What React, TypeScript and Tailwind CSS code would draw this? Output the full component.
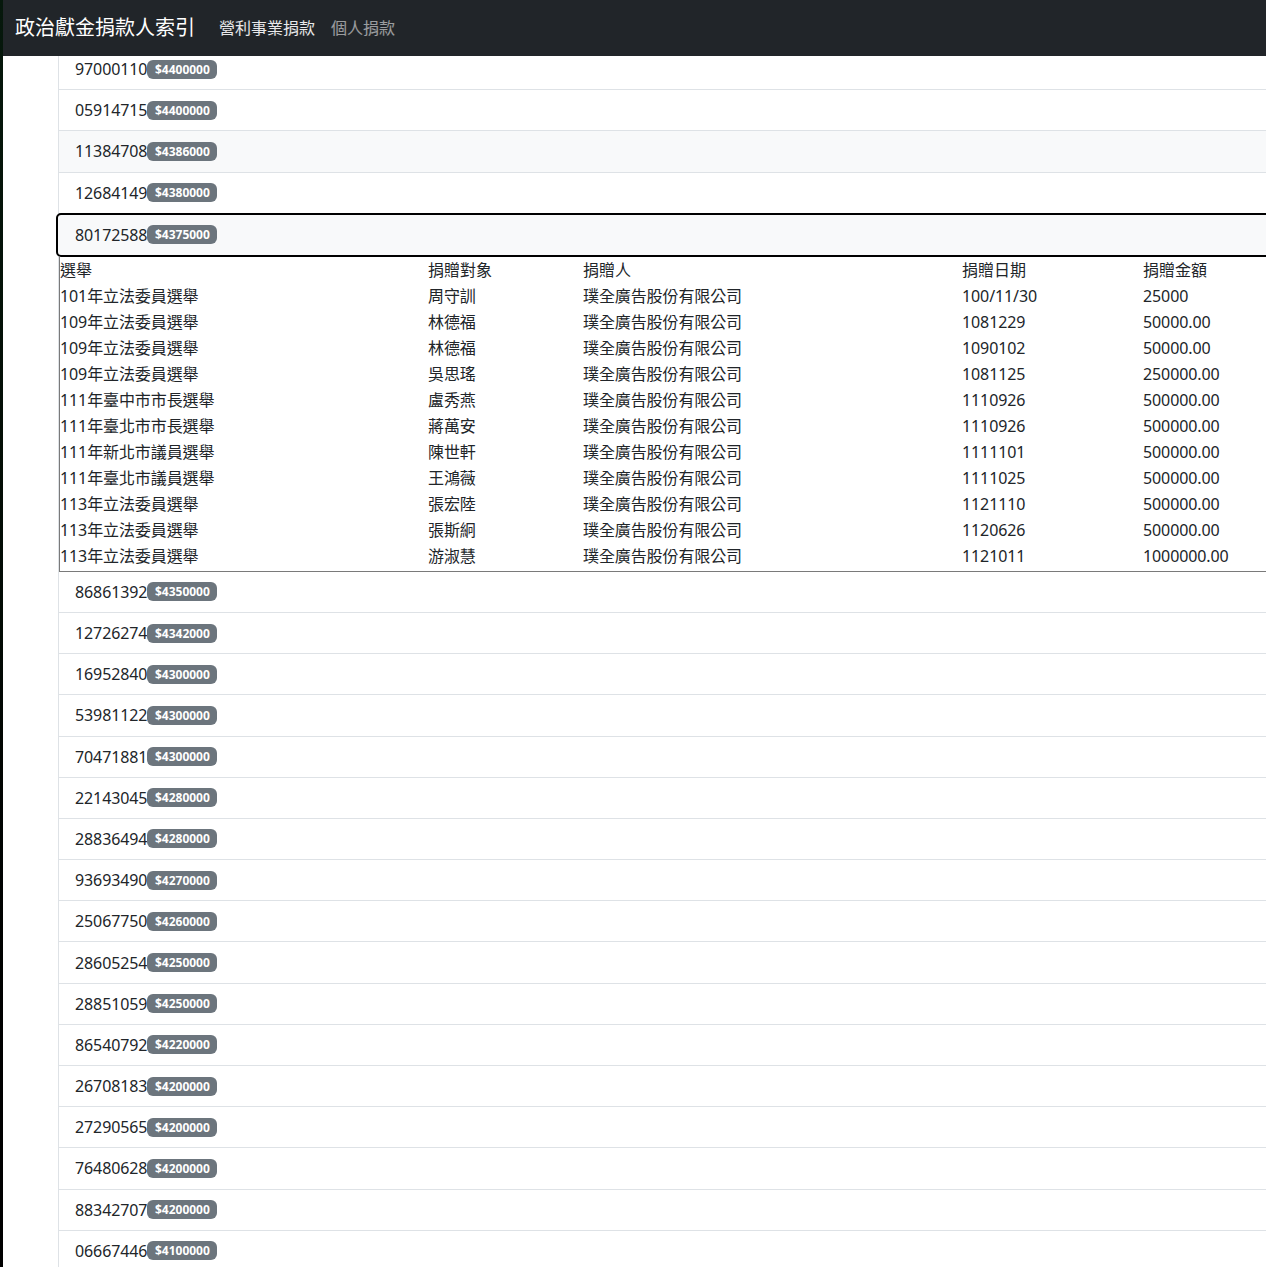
import React from "react";

const before: [string, string, boolean][] = [
  ["97000110", "$4400000", false],
  ["05914715", "$4400000", false],
  ["11384708", "$4386000", true],
  ["12684149", "$4380000", false],
];

const after: [string, string][] = [
  ["86861392", "$4350000"],
  ["12726274", "$4342000"],
  ["16952840", "$4300000"],
  ["53981122", "$4300000"],
  ["70471881", "$4300000"],
  ["22143045", "$4280000"],
  ["28836494", "$4280000"],
  ["93693490", "$4270000"],
  ["25067750", "$4260000"],
  ["28605254", "$4250000"],
  ["28851059", "$4250000"],
  ["86540792", "$4220000"],
  ["26708183", "$4200000"],
  ["27290565", "$4200000"],
  ["76480628", "$4200000"],
  ["88342707", "$4200000"],
  ["06667446", "$4100000"],
];

const rows: string[][] = [
  ["101年立法委員選舉", "周守訓", "璞全廣告股份有限公司", "100/11/30", "25000"],
  ["109年立法委員選舉", "林德福", "璞全廣告股份有限公司", "1081229", "50000.00"],
  ["109年立法委員選舉", "林德福", "璞全廣告股份有限公司", "1090102", "50000.00"],
  ["109年立法委員選舉", "吳思瑤", "璞全廣告股份有限公司", "1081125", "250000.00"],
  ["111年臺中市市長選舉", "盧秀燕", "璞全廣告股份有限公司", "1110926", "500000.00"],
  ["111年臺北市市長選舉", "蔣萬安", "璞全廣告股份有限公司", "1110926", "500000.00"],
  ["111年新北市議員選舉", "陳世軒", "璞全廣告股份有限公司", "1111101", "500000.00"],
  ["111年臺北市議員選舉", "王鴻薇", "璞全廣告股份有限公司", "1111025", "500000.00"],
  ["113年立法委員選舉", "張宏陸", "璞全廣告股份有限公司", "1121110", "500000.00"],
  ["113年立法委員選舉", "張斯絅", "璞全廣告股份有限公司", "1120626", "500000.00"],
  ["113年立法委員選舉", "游淑慧", "璞全廣告股份有限公司", "1121011", "1000000.00"],
];

function Badge({ v }: { v: string }) {
  return (
    <span className="inline-block rounded-[6px] bg-[#6c757d] px-[7.5px] text-[12px] font-bold leading-[19px] text-white">
      {v}
    </span>
  );
}

function Row({ id, amt, gray }: { id: string; amt: string; gray?: boolean }) {
  return (
    <div
      className={
        "flex h-[41.2px] items-center border-b border-[#dee2e6] px-4 " +
        (gray ? "bg-[#f8f9fa]" : "bg-white")
      }
    >
      <span className="tracking-[-0.1px]">{id}</span>
      <Badge v={amt} />
    </div>
  );
}

const cols = "grid grid-cols-[368px_155px_379px_181px_1fr]";

export default function App() {
  return (
    <div
      className="flex h-[1267px] w-[1266px] overflow-hidden bg-white text-[16px] leading-6 text-[#212529]"
      style={{ fontFamily: '"Noto Sans", "Noto Sans CJK TC", sans-serif' }}
    >
      <div className="w-[3px] shrink-0 bg-gradient-to-b from-[#06180c] via-[#020a04] to-[#000000]" />
      <div className="flex min-w-0 flex-1 flex-col">
        <nav className="relative z-10 flex h-[56px] shrink-0 items-center bg-[#212529] px-[12px]">
          <span className="mr-4 text-[20px] leading-[30px] text-white">政治獻金捐款人索引</span>
          <span className="px-2 text-[16px] text-white/90">營利事業捐款</span>
          <span className="px-2 text-[16px] text-white/55">個人捐款</span>
        </nav>
        <div className="-mt-[7px] pl-[55px]">
          <div className="w-[1300px] border-l border-[#dee2e6]">
            {before.map(([id, amt, g]) => (
              <Row key={id} id={id} amt={amt} gray={g} />
            ))}
            <div className="relative -mt-px -ml-[3px] flex h-[44px] items-center rounded-[5px] border-2 border-black bg-[#f8f9fa] pl-[17px]">
              <span className="tracking-[-0.1px]">80172588</span>
              <Badge v="$4375000" />
            </div>
            <div className="border-b border-l border-[#7a7a7a] pb-[2px] leading-[26px]">
              <div className={cols}>
                <div>選舉</div>
                <div>捐贈對象</div>
                <div>捐贈人</div>
                <div>捐贈日期</div>
                <div>捐贈金額</div>
              </div>
              {rows.map((r, i) => (
                <div key={i} className={cols}>
                  {r.map((c, j) => (
                    <div key={j} className="tracking-[-0.1px]">{c}</div>
                  ))}
                </div>
              ))}
            </div>
            {after.map(([id, amt]) => (
              <Row key={id} id={id} amt={amt} />
            ))}
          </div>
        </div>
      </div>
    </div>
  );
}
